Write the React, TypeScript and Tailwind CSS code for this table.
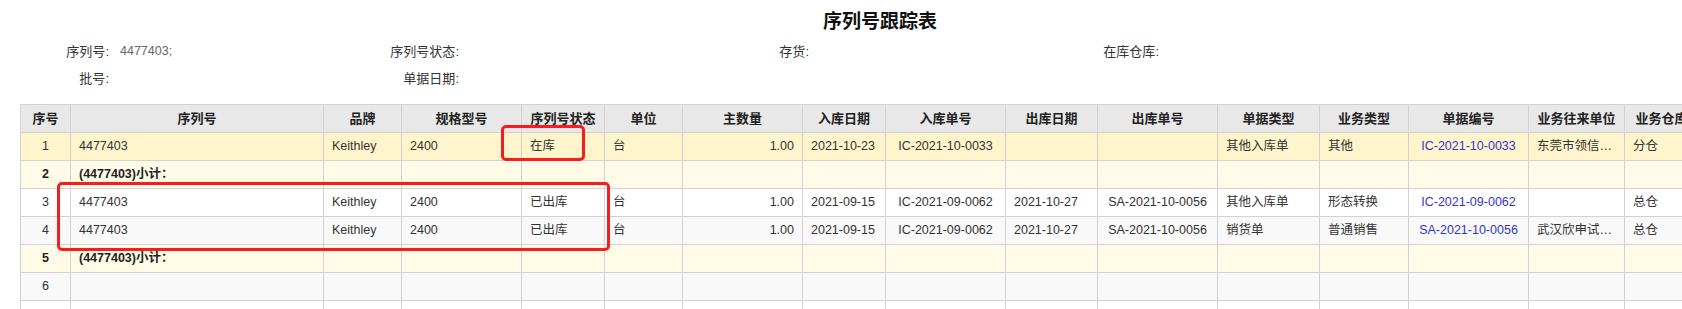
import React from 'react';

type Row = {
  no: number;
  sub?: boolean;
  serial?: string;
  brand?: string;
  model?: string;
  status?: string;
  unit?: string;
  qty?: string;
  inDate?: string;
  inNo?: string;
  outDate?: string;
  outNo?: string;
  billType?: string;
  bizType?: string;
  billNo?: string;
  partner?: string;
  warehouse?: string;
  bg: string;
};

const rows: Row[] = [
  {
    no: 1, serial: '4477403', brand: 'Keithley', model: '2400', status: '在库', unit: '台', qty: '1.00',
    inDate: '2021-10-23', inNo: 'IC-2021-10-0033', billType: '其他入库单', bizType: '其他',
    billNo: 'IC-2021-10-0033', partner: '东莞市领信电子科技有限公司', warehouse: '分仓', bg: 'bg-[#fff5cc]',
  },
  { no: 2, sub: true, serial: '(4477403)小计：', bg: 'bg-[#fffbe6]' },
  {
    no: 3, serial: '4477403', brand: 'Keithley', model: '2400', status: '已出库', unit: '台', qty: '1.00',
    inDate: '2021-09-15', inNo: 'IC-2021-09-0062', outDate: '2021-10-27', outNo: 'SA-2021-10-0056',
    billType: '其他入库单', bizType: '形态转换', billNo: 'IC-2021-09-0062', warehouse: '总仓', bg: 'bg-white',
  },
  {
    no: 4, serial: '4477403', brand: 'Keithley', model: '2400', status: '已出库', unit: '台', qty: '1.00',
    inDate: '2021-09-15', inNo: 'IC-2021-09-0062', outDate: '2021-10-27', outNo: 'SA-2021-10-0056',
    billType: '销货单', bizType: '普通销售', billNo: 'SA-2021-10-0056', partner: '武汉欣申试验设备有限公司',
    warehouse: '总仓', bg: 'bg-[#f9f9f9]',
  },
  { no: 5, sub: true, serial: '(4477403)小计：', bg: 'bg-[#fffbe6]' },
  { no: 6, bg: 'bg-[#f9f9f9]' },
  { no: 7, bg: 'bg-white' },
];

const headers = [
  '序号', '序列号', '品牌', '规格型号', '序列号状态', '单位', '主数量', '入库日期', '入库单号',
  '出库日期', '出库单号', '单据类型', '业务类型', '单据编号', '业务往来单位', '业务仓库',
];

const colWidths = [50, 253, 78, 120, 83, 78, 120, 83, 120, 92, 120, 102, 89, 120, 96, 74];

const font = { fontFamily: '"Liberation Sans", "Noto Sans CJK SC", sans-serif' };

function Filter({ label, value }: { label: string; value?: string }) {
  return (
    <div className="flex w-[350px] items-center">
      <span className="w-[109px] text-right text-[13px] text-[#333]">{label}:</span>
      <span className="pl-[11px] text-[12.5px] text-[#666]">{value}</span>
    </div>
  );
}

export default function App() {
  const td = 'border border-[#d2d2d2] h-[28px] px-2 whitespace-nowrap overflow-hidden text-ellipsis';
  return (
    <div className="relative w-full h-[309px] overflow-hidden bg-white text-[12px] text-[#333]" style={font}>
      {/* Title */}
      <div className="pt-[10px] pl-[78px] text-center text-[19px] leading-[24px] font-bold text-[#111]">
        序列号跟踪表
      </div>

      {/* Filters */}
      <div className="mt-[4px]">
        <div className="flex h-[27px] items-center">
          <Filter label="序列号" value="4477403;" />
          <Filter label="序列号状态" />
          <Filter label="存货" />
          <Filter label="在库仓库" />
        </div>
        <div className="flex h-[27px] items-center">
          <Filter label="批号" />
          <Filter label="单据日期" />
        </div>
      </div>

      {/* Table */}
      <div className="mt-[12px] pl-[20px]">
        <table className="table-fixed border-collapse w-[1678px] text-[12.5px]">
          <colgroup>
            {colWidths.map((w, i) => (
              <col key={i} style={{ width: w }} />
            ))}
          </colgroup>
          <thead>
            <tr className="bg-[#e8e8e8]">
              {headers.map(h => (
                <th key={h} className={`${td} text-center font-bold text-[13px] text-[#222]`}>{h}</th>
              ))}
            </tr>
          </thead>
          <tbody>
            {rows.map(r => (
              <tr key={r.no} className={r.bg}>
                <td className={`${td} text-center ${r.sub ? 'font-bold text-[#222]' : ''}`}>{r.no}</td>
                <td className={`${td} text-left ${r.sub ? 'font-bold text-[#222]' : ''}`}>{r.serial}</td>
                <td className={td}>{r.brand}</td>
                <td className={td}>{r.model}</td>
                <td className={td}>{r.status}</td>
                <td className={td}>{r.unit}</td>
                <td className={`${td} text-right`}>{r.qty}</td>
                <td className={td}>{r.inDate}</td>
                <td className={`${td} text-center`}>{r.inNo}</td>
                <td className={td}>{r.outDate}</td>
                <td className={`${td} text-center`}>{r.outNo}</td>
                <td className={td}>{r.billType}</td>
                <td className={td}>{r.bizType}</td>
                <td className={`${td} text-center text-[#3535cc]`}>{r.billNo}</td>
                <td className={td}>{r.partner}</td>
                <td className={td}>{r.warehouse}</td>
              </tr>
            ))}
          </tbody>
        </table>
      </div>

      {/* Red annotation boxes */}
      <div className="absolute left-[501px] top-[125px] w-[84px] h-[36px] border-[3px] border-[#f51d1d] rounded-[5px]" />
      <div className="absolute left-[57px] top-[182px] w-[553px] h-[69px] border-[3px] border-[#f51d1d] rounded-[5px]" />
    </div>
  );
}
